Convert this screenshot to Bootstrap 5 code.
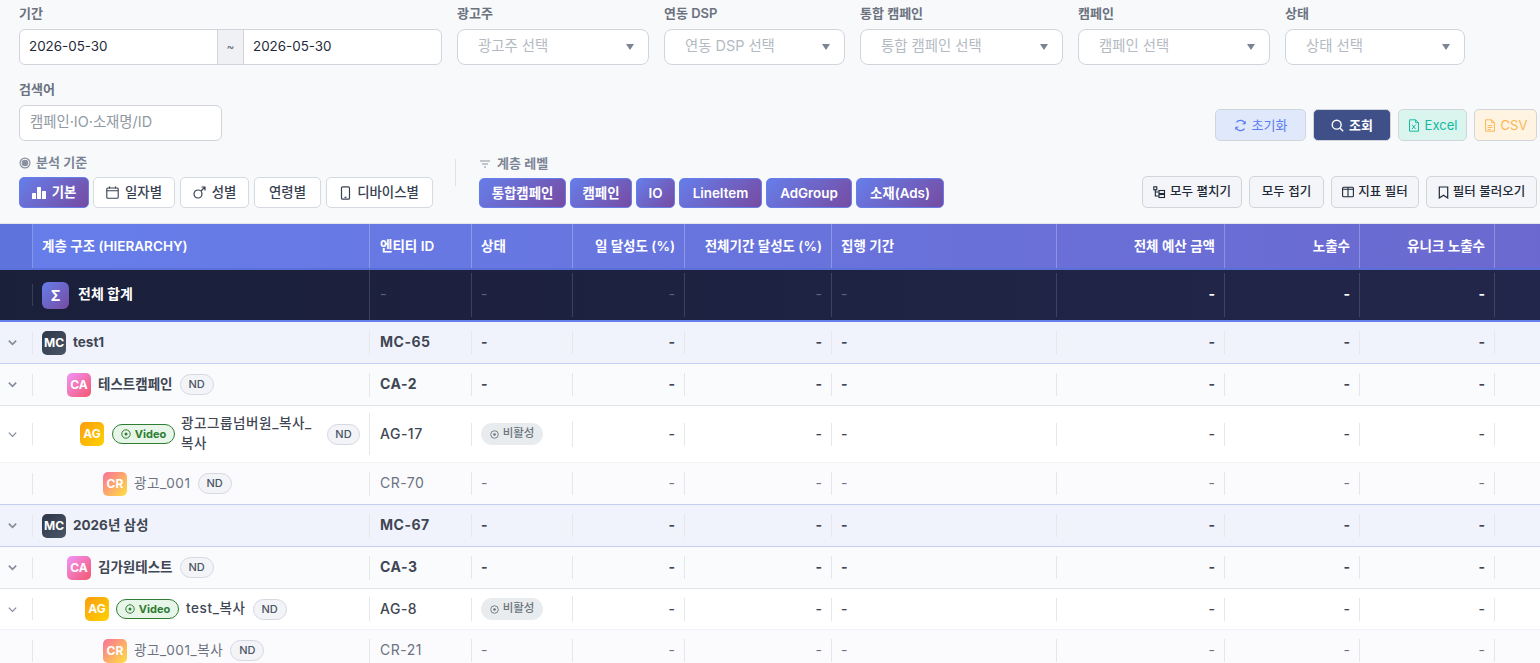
<!DOCTYPE html>
<html lang="ko">
<head>
  <meta charset="UTF-8" />
  <title>리포트</title>
  <link href="https://cdn.jsdelivr.net/npm/bootstrap@5.3.0/dist/css/bootstrap.min.css" rel="stylesheet" />
  <style>
    body { font-family: Inter, "Noto Sans CJK KR", sans-serif; background: #f8f9fb; color: #374151; }
    svg { flex: none; }

    /* filter area */
    .filter-area { padding: 5px 3px 0 19px; height: 224px; border-bottom: 1px solid #e5e7eb; }
    .filter-top { gap: 15px; }
    .field-label { font-size: 13px; font-weight: 600; color: #6b7280; line-height: 17px; margin-bottom: 7px; }
    .field-box { height: 36px; border: 1px solid #d1d5db; border-radius: 6px; background: #fff; font-size: 14.4px; padding: 0 10px; }
    .date-text { color: #1f2937; flex: 1; padding: 0 9px; font-size: 13.4px; line-height: 33px; }
    .date-sep { width: 27px; background: #eff1f5; border: solid #d1d5db; border-width: 0 1px; color: #6b7280; font-size: 12px; line-height: 34px; text-align: center; }
    .pick-box { padding: 0 14px 0 20px; color: #b4bac2; border-radius: 8px; }
    .pick-box span { margin-bottom: 3px; }
    .search-ph { color: #9199a3; margin-bottom: 2px; }
    .caret-down { width: 0; height: 0; margin-bottom: 1px; border: solid transparent; border-width: 6px 4px 0; border-top-color: #7b8494; }
    .w-date { width: 423px; }
    .w-adv { width: 192px; }
    .w-dsp { width: 181px; }
    .w-camp { width: 203px; }
    .w-stat { width: 180px; }

    .tool-row { gap: 7px; }
    .tool-btn { height: 32px; border: 1px solid #d1d5db; border-radius: 5px; font-size: 13px; font-weight: 400; padding: 0; line-height: 1; gap: 5px; }
    .btn-reset { width: 91px; background: #e0e8fb; color: #5b7cf0; }
    .btn-find { width: 78px; background: #3f4f88; color: #fff; font-weight: 600; }
    .btn-xls { width: 69px; background: #d9f5ee; color: #14b8a0; }
    .btn-csv { width: 63px; background: #fff3e2; color: #fbb754; }
    .btn-light-tool { background: #f3f5f8; color: #1f2937; font-size: 12.5px; font-weight: 500; gap: 4px; }
    .w-expand { width: 100px; }
    .w-fold { width: 75px; }
    .w-metric { width: 88px; }
    .w-load { width: 111px; }

    .lower-row { margin-top: 13px; }
    .mini-label { font-size: 13px; font-weight: 600; color: #7b8494; line-height: 17px; gap: 5px; margin-bottom: 6px; }
    .level-label { margin: 1px 0 6px; gap: 6px; }
    .view-row { gap: 5px; }
    .view-btn { height: 31px; border: 1px solid #d5d9e0; border-radius: 5px; background: #fff; font-size: 13.4px; font-weight: 500; color: #374151; padding: 0; gap: 6px; }
    .view-on { background: linear-gradient(135deg, #667eea, #764ba2); border-color: #667eea; color: #fff; font-weight: 700; }
    .w-v1 { width: 70px; margin-right: -1px; }
    .w-v2 { width: 82px; }
    .w-v3 { width: 69px; }
    .w-v4 { width: 67px; }
    .w-v5 { width: 107px; }
    .split-line { width: 1px; height: 27px; background: #dfe2e8; margin: 5px 23px 0 22px; }
    .pill-row { gap: 4px; }
    .level-pill { height: 30px; border: 1px solid #667eea; border-radius: 5px; background: linear-gradient(135deg, #667eea, #764ba2); color: #fff; font-size: 13.4px; font-weight: 600; padding: 0; }
    .w-p1 { width: 87px; }
    .w-p2 { width: 62px; }
    .w-p3 { width: 39px; }
    .w-p4 { width: 83px; }
    .w-p5 { width: 86px; }
    .w-p6 { width: 88px; }

    /* hierarchy table */
    .tbl-wrap { width: 1540px; overflow: hidden; }
    .hier-table { --bs-table-bg: transparent; table-layout: fixed; width: 1635px; border-collapse: separate; border-spacing: 0; margin: 0; }
    .hier-table col:nth-child(1) { width: 33px; }
    .hier-table col:nth-child(2) { width: 337px; }
    .hier-table col:nth-child(3) { width: 102px; }
    .hier-table col:nth-child(4) { width: 101px; }
    .hier-table col:nth-child(5) { width: 112px; }
    .hier-table col:nth-child(6) { width: 147px; }
    .hier-table col:nth-child(7) { width: 225px; }
    .hier-table col:nth-child(8) { width: 168px; }
    .hier-table col:nth-child(9) { width: 135px; }
    .hier-table col:nth-child(10) { width: 135px; }
    .hier-table col:nth-child(11) { width: 140px; }
    .hier-table > * > tr > * { padding: 0; border: 0; vertical-align: middle; font-size: 14px; box-shadow: none; }
    .cel { border-right: 1px solid #e5e7eb; min-height: 22px; padding: 0 9px 2px 9px; display: flex; align-items: center; }
    .cel-r { justify-content: flex-end; }
    .id-cel { letter-spacing: .5px; padding-left: 10px; }

    .hier-table thead tr { background: linear-gradient(90deg, #667eea 0, #6b69cf 1540px); }
    .hier-table > thead > tr > th { height: 46px; border-bottom: 2px solid #5a6fd8; color: #fff; font-size: 13.5px; font-weight: 600; }
    .hier-table thead .cel { height: 44px; padding-bottom: 0; border-right-color: rgba(255, 255, 255, .25); }
    .hier-table thead .cel-id { padding-left: 10px; }
    .hier-table > thead > tr > th:first-child { background: rgba(40, 50, 120, .12); }

    .row-total { background: linear-gradient(90deg, #1a1f3a 0, #22264a 1540px); }
    .hier-table > tbody > .row-total > td { height: 52px; border-bottom: 2px solid #667eea; color: #fff; font-weight: 700; }
    .row-total .cel { height: 44px; padding-bottom: 4px; border-right-color: rgba(255, 255, 255, .14); }
    .row-total .cel-id { padding-left: 10px; }
    .hier-table > tbody > .row-total > td .cel-thin { color: #5d6480; font-weight: 400; }
    .row-total .cel-first { height: 22px; padding-bottom: 0; }
    .row-total .cel-name { height: 50px; padding-bottom: 0; }
    .total-name { font-size: 14px; font-weight: 700; margin: 0 0 3px 9px; }

    .row-mc { background: #f1f3fc; }
    .row-ca { background: #fafbfd; }
    .row-ag { background: #fff; }
    .row-cr { background: #fbfbfe; }
    .hier-table > tbody > tr > td { color: #3f4654; }
    .hier-table > tbody > .row-mc > td { height: 42px; border-bottom: 1px solid #c7cff0; font-weight: 700; }
    .hier-table > tbody > .row-ca > td { height: 42px; border-bottom: 1px solid #e2e4ea; font-weight: 700; }
    .hier-table > tbody > .row-ag > td { height: 57px; border-bottom: 1px solid #f1f2f6; font-weight: 500; }
    .hier-table > tbody > .row-ag-one > td { height: 41px; }
    .hier-table > tbody > .row-cr > td { height: 42px; border-bottom: 1px solid #f1f2f6; color: #6b7280; font-weight: 400; }
    .hier-table > tbody > .row-end > td { border-bottom: 1px solid #c7cff0; }
    .cel-name { padding: 0 9px; min-height: 24px; }
    .nm { font-size: 13.5px; margin: 0 0 2px 7px; line-height: 20px; }
    .nm-long { letter-spacing: .6px; }
    .nm-wrap { width: 133px; flex: none; margin-left: 6px; }
    .ind-ca { padding-left: 34px; }
    .ind-ag { padding-left: 47px; }
    .ind-ag2 { padding-left: 52px; }
    .ind-cr { padding-left: 70px; }
    .chev-cell { justify-content: center; padding: 0 8px 0 0; color: #858c9a; }

    .type-icon { width: 24px; height: 24px; border-radius: 5px; color: #fff; font-size: 12px; font-weight: 700; line-height: 24px; text-align: center; flex: none; }
    .ic-sum { width: 27px; height: 27px; border-radius: 6px; font-size: 14px; line-height: 27px; background: linear-gradient(135deg, #667eea, #764ba2); }
    .ic-mc { background: linear-gradient(135deg, #2d3748, #4a5568); }
    .ic-ca { background: linear-gradient(135deg, #f093fb, #f5576c); }
    .ic-ag { background: linear-gradient(135deg, #fa9d0f, #ffd200); }
    .ic-cr { background: linear-gradient(135deg, #fa709a, #fee140); }

    .tag-nd { width: 34px; height: 21px; border: 1px solid #d5d8e0; border-radius: 11px; background: #f3f4f8; color: #4b5563; font-size: 11px; font-weight: 500; line-height: 19px; text-align: center; margin-left: 7px; flex: none; }
    .tag-nd-far { width: 33px; margin-left: 13px; }
    .tag-video { width: 63px; height: 20px; border: 1px solid #2e7d32; border-radius: 10px; background: #e8f5e9; color: #2e7d32; font-size: 11px; font-weight: 700; margin-left: 8px; flex: none; }
    .row-ag-one .tag-video { margin-left: 7px; }
    .tag-off { width: 62px; height: 22px; margin-top: 2px; border-radius: 11px; background: #e9ecef; color: #6c757d; font-size: 11.5px; font-weight: 500; }
  </style>
</head>
<body class="vh-100 overflow-hidden">
  <div class="filter-area">
    <div class="d-flex filter-top">
      <div class="w-date">
        <div class="field-label">기간</div>
        <div class="field-box d-flex p-0">
          <div class="date-text">2026-05-30</div>
          <div class="date-sep">~</div>
          <div class="date-text">2026-05-30</div>
        </div>
      </div>
      <div class="w-adv">
        <div class="field-label">광고주</div>
        <div class="field-box pick-box d-flex align-items-center justify-content-between"><span>광고주 선택</span><i class="caret-down"></i></div>
      </div>
      <div class="w-dsp">
        <div class="field-label">연동 DSP</div>
        <div class="field-box pick-box d-flex align-items-center justify-content-between"><span>연동 DSP 선택</span><i class="caret-down"></i></div>
      </div>
      <div class="w-camp">
        <div class="field-label">통합 캠페인</div>
        <div class="field-box pick-box d-flex align-items-center justify-content-between"><span>통합 캠페인 선택</span><i class="caret-down"></i></div>
      </div>
      <div class="w-adv">
        <div class="field-label">캠페인</div>
        <div class="field-box pick-box d-flex align-items-center justify-content-between"><span>캠페인 선택</span><i class="caret-down"></i></div>
      </div>
      <div class="w-stat">
        <div class="field-label">상태</div>
        <div class="field-box pick-box d-flex align-items-center justify-content-between"><span>상태 선택</span><i class="caret-down"></i></div>
      </div>
    </div>

    <div class="d-flex justify-content-between align-items-end mt-3">
      <div class="w-camp">
        <div class="field-label">검색어</div>
        <div class="field-box d-flex align-items-center"><span class="search-ph">캠페인·IO·소재명/ID</span></div>
      </div>
      <div class="d-flex tool-row">
        <button class="tool-btn btn-reset d-flex align-items-center justify-content-center">
          <svg width="13" height="13" viewBox="0 0 16 16" fill="none" stroke="currentColor" stroke-width="1.5"><path d="M13.600 6A6 6 0 0 0 3 4.200M2.400 10A6 6 0 0 0 13 11.800"/><path d="M13.800 2.500V6h-3.400M2.200 13.500V10h3.400" stroke-width="1.200"/></svg>초기화
        </button>
        <button class="tool-btn btn-find d-flex align-items-center justify-content-center">
          <svg width="13" height="13" viewBox="0 0 16 16" fill="none" stroke="currentColor" stroke-width="1.700"><circle cx="7" cy="7" r="5.500"/><path d="M11 11l4 4"/></svg>조회
        </button>
        <button class="tool-btn btn-xls d-flex align-items-center justify-content-center">
          <svg width="12" height="13" viewBox="0 0 14 16" fill="none" stroke="currentColor" stroke-width="1.200"><path d="M1.500 1h7.500l3.500 3.500V15h-11z"/><path d="M9 1v3.500h3.500M4.500 7l4.500 5.500M9 7l-4.500 5.500"/></svg>Excel
        </button>
        <button class="tool-btn btn-csv d-flex align-items-center justify-content-center">
          <svg width="12" height="13" viewBox="0 0 14 16" fill="none" stroke="currentColor" stroke-width="1.200"><path d="M1.500 1h7.500l3.500 3.500V15h-11z"/><path d="M9 1v3.500h3.500M4 8h6M4 10.500h6M4 13h4"/></svg>CSV
        </button>
      </div>
    </div>

    <div class="d-flex justify-content-between align-items-end lower-row">
      <div class="d-flex align-items-start">
        <div>
          <div class="mini-label d-flex align-items-center">
            <svg width="12" height="12" viewBox="0 0 12 12" fill="#8a919e"><path d="M6 .5a5.500 5.500 0 1 0 0 11 5.500 5.500 0 0 0 0-11zm0 1.200a4.300 4.300 0 1 1 0 8.600 4.300 4.300 0 0 1 0-8.600z"/><circle cx="6" cy="6" r="3.300"/></svg>분석 기준
          </div>
          <div class="d-flex view-row">
            <button class="view-btn view-on w-v1 d-flex align-items-center justify-content-center">
              <svg width="14" height="13" viewBox="0 0 14 13" fill="#fff"><rect x="0" y="7" width="4" height="6" rx=".6"/><rect x="5" y="1" width="4" height="12" rx=".6"/><rect x="10" y="5" width="4" height="8" rx=".6"/></svg>기본
            </button>
            <button class="view-btn w-v2 d-flex align-items-center justify-content-center">
              <svg width="13" height="13" viewBox="0 0 13 13" fill="none" stroke="#374151" stroke-width="1.100"><rect x=".8" y="2" width="11.400" height="10.200" rx="1"/><path d="M.8 4.800h11.400M3.500.5v2M9.500.5v2"/></svg>일자별
            </button>
            <button class="view-btn w-v3 d-flex align-items-center justify-content-center">
              <svg width="13" height="13" viewBox="0 0 13 13" fill="none" stroke="#374151" stroke-width="1.200"><circle cx="5" cy="8" r="4"/><path d="M8 5l4-4M8.500 1H12v3.500"/></svg>성별
            </button>
            <button class="view-btn w-v4">연령별</button>
            <button class="view-btn w-v5 d-flex align-items-center justify-content-center">
              <svg width="11" height="14" viewBox="0 0 11 14" fill="none" stroke="#374151" stroke-width="1.200"><rect x="1.500" y=".8" width="8" height="12.400" rx="1.300"/><path d="M4.500 11.300h2"/></svg>디바이스별
            </button>
          </div>
        </div>
        <div class="split-line"></div>
        <div>
          <div class="mini-label level-label d-flex align-items-center">
            <svg width="12" height="12" viewBox="0 0 12 12" stroke="#8a919e" stroke-width="1.200" fill="none"><path d="M1 3h10M3 6h6M5 9h2"/></svg>계층 레벨
          </div>
          <div class="d-flex pill-row">
            <button class="level-pill w-p1">통합캠페인</button>
            <button class="level-pill w-p2">캠페인</button>
            <button class="level-pill w-p3">IO</button>
            <button class="level-pill w-p4">LineItem</button>
            <button class="level-pill w-p5">AdGroup</button>
            <button class="level-pill w-p6">소재(Ads)</button>
          </div>
        </div>
      </div>
      <div class="d-flex tool-row">
        <button class="tool-btn btn-light-tool w-expand d-flex align-items-center justify-content-center">
          <svg width="13" height="13" viewBox="0 0 13 13" fill="none" stroke="#1f2937" stroke-width="1.100"><rect x=".8" y=".8" width="3" height="3"/><path d="M2.300 3.800V10h3.500M2.300 6h3.500"/><rect x="6" y="4.500" width="5.500" height="3"/><rect x="6" y="8.500" width="5.500" height="3"/></svg>모두 펼치기
        </button>
        <button class="tool-btn btn-light-tool w-fold">모두 접기</button>
        <button class="tool-btn btn-light-tool w-metric d-flex align-items-center justify-content-center">
          <svg width="12" height="12" viewBox="0 0 12 12" fill="none" stroke="#1f2937" stroke-width="1.100"><rect x=".6" y="1.200" width="10.800" height="9.600" rx="1"/><path d="M6 1.200v9.600M.6 3.200h10.800"/></svg>지표 필터
        </button>
        <button class="tool-btn btn-light-tool w-load d-flex align-items-center justify-content-center">
          <svg width="11" height="13" viewBox="0 0 11 13" fill="none" stroke="#1f2937" stroke-width="1.200"><path d="M1.300 1h8.400v11L5.500 9.300 1.300 12z"/></svg>필터 불러오기
        </button>
      </div>
    </div>
  </div>

  <div class="tbl-wrap">
    <table class="table hier-table">
      <colgroup><col><col><col><col><col><col><col><col><col><col><col></colgroup>
      <thead>
        <tr>
          <th><div class="cel"></div></th>
          <th><div class="cel cel-name">계층 구조 (HIERARCHY)</div></th>
          <th><div class="cel cel-id">엔티티 ID</div></th>
          <th><div class="cel">상태</div></th>
          <th><div class="cel cel-r">일 달성도 (%)</div></th>
          <th><div class="cel cel-r">전체기간 달성도 (%)</div></th>
          <th><div class="cel">집행 기간</div></th>
          <th><div class="cel cel-r">전체 예산 금액</div></th>
          <th><div class="cel cel-r">노출수</div></th>
          <th><div class="cel cel-r">유니크 노출수</div></th>
          <th></th>
        </tr>
      </thead>
      <tbody>
        <tr class="row-total">
          <td><div class="cel cel-first"></div></td>
          <td><div class="cel cel-name"><div class="type-icon ic-sum">Σ</div><span class="total-name">전체 합계</span></div></td>
          <td><div class="cel cel-id cel-thin">-</div></td>
          <td><div class="cel cel-thin">-</div></td>
          <td><div class="cel cel-r cel-thin">-</div></td>
          <td><div class="cel cel-r cel-thin">-</div></td>
          <td><div class="cel cel-thin">-</div></td>
          <td><div class="cel cel-r">-</div></td>
          <td><div class="cel cel-r">-</div></td>
          <td><div class="cel cel-r">-</div></td>
          <td></td>
        </tr>
        <tr class="row-mc">
          <td><div class="cel chev-cell"><svg width="11" height="11" viewBox="0 0 12 12" fill="none" stroke="currentColor" stroke-width="1.800"><path d="M2 4l4 4 4-4"/></svg></div></td>
          <td><div class="cel cel-name"><div class="type-icon ic-mc">MC</div><span class="nm">test1</span></div></td>
          <td><div class="cel id-cel">MC-65</div></td>
          <td><div class="cel">-</div></td>
          <td><div class="cel cel-r">-</div></td>
          <td><div class="cel cel-r">-</div></td>
          <td><div class="cel">-</div></td>
          <td><div class="cel cel-r">-</div></td>
          <td><div class="cel cel-r">-</div></td>
          <td><div class="cel cel-r">-</div></td>
          <td></td>
        </tr>
        <tr class="row-ca">
          <td><div class="cel chev-cell"><svg width="11" height="11" viewBox="0 0 12 12" fill="none" stroke="currentColor" stroke-width="1.800"><path d="M2 4l4 4 4-4"/></svg></div></td>
          <td><div class="cel cel-name ind-ca"><div class="type-icon ic-ca">CA</div><span class="nm">테스트캠페인</span><span class="tag-nd">ND</span></div></td>
          <td><div class="cel id-cel">CA-2</div></td>
          <td><div class="cel">-</div></td>
          <td><div class="cel cel-r">-</div></td>
          <td><div class="cel cel-r">-</div></td>
          <td><div class="cel">-</div></td>
          <td><div class="cel cel-r">-</div></td>
          <td><div class="cel cel-r">-</div></td>
          <td><div class="cel cel-r">-</div></td>
          <td></td>
        </tr>
        <tr class="row-ag">
          <td><div class="cel chev-cell"><svg width="11" height="11" viewBox="0 0 12 12" fill="none" stroke="currentColor" stroke-width="1.400"><path d="M2 4l4 4 4-4"/></svg></div></td>
          <td><div class="cel cel-name ind-ag"><div class="type-icon ic-ag">AG</div>
            <span class="tag-video d-flex align-items-center justify-content-center gap-1"><svg width="10" height="10" viewBox="0 0 10 10" fill="none" stroke="currentColor"><circle cx="5" cy="5" r="4.200"/><circle cx="5" cy="5" r="1.500" fill="currentColor" stroke="none"/></svg>Video</span>
            <span class="nm nm-long nm-wrap">광고그룹넘버원_복사_<br>복사</span><span class="tag-nd tag-nd-far">ND</span></div></td>
          <td><div class="cel id-cel">AG-17</div></td>
          <td><div class="cel"><span class="tag-off d-flex align-items-center justify-content-center gap-1"><svg width="9" height="9" viewBox="0 0 10 10" fill="none" stroke="currentColor"><circle cx="5" cy="5" r="4.200"/><circle cx="5" cy="5" r="1.500" fill="currentColor" stroke="none"/></svg>비활성</span></div></td>
          <td><div class="cel cel-r">-</div></td>
          <td><div class="cel cel-r">-</div></td>
          <td><div class="cel">-</div></td>
          <td><div class="cel cel-r">-</div></td>
          <td><div class="cel cel-r">-</div></td>
          <td><div class="cel cel-r">-</div></td>
          <td></td>
        </tr>
        <tr class="row-cr row-end">
          <td><div class="cel"></div></td>
          <td><div class="cel cel-name ind-cr"><div class="type-icon ic-cr">CR</div><span class="nm nm-long">광고_001</span><span class="tag-nd">ND</span></div></td>
          <td><div class="cel id-cel">CR-70</div></td>
          <td><div class="cel">-</div></td>
          <td><div class="cel cel-r">-</div></td>
          <td><div class="cel cel-r">-</div></td>
          <td><div class="cel">-</div></td>
          <td><div class="cel cel-r">-</div></td>
          <td><div class="cel cel-r">-</div></td>
          <td><div class="cel cel-r">-</div></td>
          <td></td>
        </tr>
        <tr class="row-mc">
          <td><div class="cel chev-cell"><svg width="11" height="11" viewBox="0 0 12 12" fill="none" stroke="currentColor" stroke-width="1.800"><path d="M2 4l4 4 4-4"/></svg></div></td>
          <td><div class="cel cel-name"><div class="type-icon ic-mc">MC</div><span class="nm">2026년 삼성</span></div></td>
          <td><div class="cel id-cel">MC-67</div></td>
          <td><div class="cel">-</div></td>
          <td><div class="cel cel-r">-</div></td>
          <td><div class="cel cel-r">-</div></td>
          <td><div class="cel">-</div></td>
          <td><div class="cel cel-r">-</div></td>
          <td><div class="cel cel-r">-</div></td>
          <td><div class="cel cel-r">-</div></td>
          <td></td>
        </tr>
        <tr class="row-ca">
          <td><div class="cel chev-cell"><svg width="11" height="11" viewBox="0 0 12 12" fill="none" stroke="currentColor" stroke-width="1.800"><path d="M2 4l4 4 4-4"/></svg></div></td>
          <td><div class="cel cel-name ind-ca"><div class="type-icon ic-ca">CA</div><span class="nm">김가원테스트</span><span class="tag-nd">ND</span></div></td>
          <td><div class="cel id-cel">CA-3</div></td>
          <td><div class="cel">-</div></td>
          <td><div class="cel cel-r">-</div></td>
          <td><div class="cel cel-r">-</div></td>
          <td><div class="cel">-</div></td>
          <td><div class="cel cel-r">-</div></td>
          <td><div class="cel cel-r">-</div></td>
          <td><div class="cel cel-r">-</div></td>
          <td></td>
        </tr>
        <tr class="row-ag row-ag-one">
          <td><div class="cel chev-cell"><svg width="11" height="11" viewBox="0 0 12 12" fill="none" stroke="currentColor" stroke-width="1.400"><path d="M2 4l4 4 4-4"/></svg></div></td>
          <td><div class="cel cel-name ind-ag2"><div class="type-icon ic-ag">AG</div>
            <span class="tag-video d-flex align-items-center justify-content-center gap-1"><svg width="10" height="10" viewBox="0 0 10 10" fill="none" stroke="currentColor"><circle cx="5" cy="5" r="4.200"/><circle cx="5" cy="5" r="1.500" fill="currentColor" stroke="none"/></svg>Video</span>
            <span class="nm nm-long">test_복사</span><span class="tag-nd">ND</span></div></td>
          <td><div class="cel id-cel">AG-8</div></td>
          <td><div class="cel"><span class="tag-off d-flex align-items-center justify-content-center gap-1"><svg width="9" height="9" viewBox="0 0 10 10" fill="none" stroke="currentColor"><circle cx="5" cy="5" r="4.200"/><circle cx="5" cy="5" r="1.500" fill="currentColor" stroke="none"/></svg>비활성</span></div></td>
          <td><div class="cel cel-r">-</div></td>
          <td><div class="cel cel-r">-</div></td>
          <td><div class="cel">-</div></td>
          <td><div class="cel cel-r">-</div></td>
          <td><div class="cel cel-r">-</div></td>
          <td><div class="cel cel-r">-</div></td>
          <td></td>
        </tr>
        <tr class="row-cr">
          <td><div class="cel"></div></td>
          <td><div class="cel cel-name ind-cr"><div class="type-icon ic-cr">CR</div><span class="nm nm-long">광고_001_복사</span><span class="tag-nd">ND</span></div></td>
          <td><div class="cel id-cel">CR-21</div></td>
          <td><div class="cel">-</div></td>
          <td><div class="cel cel-r">-</div></td>
          <td><div class="cel cel-r">-</div></td>
          <td><div class="cel">-</div></td>
          <td><div class="cel cel-r">-</div></td>
          <td><div class="cel cel-r">-</div></td>
          <td><div class="cel cel-r">-</div></td>
          <td></td>
        </tr>
      </tbody>
    </table>
  </div>
</body>
</html>
